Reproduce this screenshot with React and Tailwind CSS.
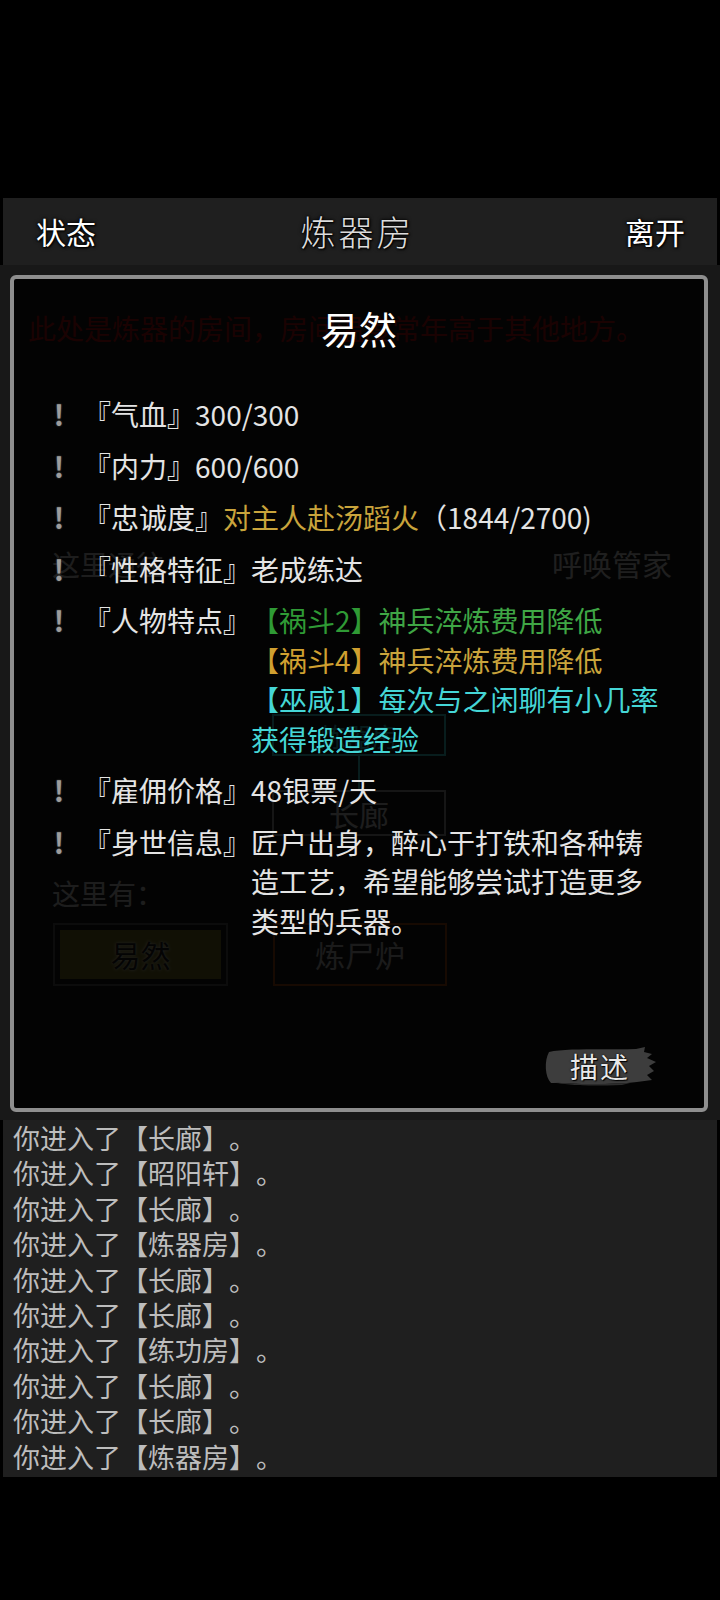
const logLines = [
  "长廊",
  "昭阳轩",
  "长廊",
  "炼器房",
  "长廊",
  "长廊",
  "练功房",
  "长廊",
  "长廊",
  "炼器房",
];

function Row({ label, children }) {
  return (
    <div className="flex">
      <span className="w-[28px] shrink-0 text-center font-bold text-[#9c9c9c] [text-shadow:0_0_2px_#555]">
        !
      </span>
      <span className="ml-[10px] shrink-0 text-[#e4e4e4]">『{label}』</span>
      <div className="flex-1 min-w-0">{children}</div>
    </div>
  );
}

function RoomBehind() {
  // the room page that lies under the dialog
  return (
    <div className="h-full flex flex-col px-[18px] pt-[40px]">
      <p className="text-[28px] leading-[46px] text-[#b81010] pl-[10px]">
        此处是炼器的房间，房间温度常年高于其他地方。
      </p>
      <div className="mt-[190px] flex items-center justify-between pl-[34px] pr-[30px]">
        <span className="text-[28px] text-[#cfcfcf]">这里通往：</span>
        <span className="text-[30px] text-[#d8d8d8]">呼唤管家</span>
      </div>
      <div className="mt-[128px] ml-[254px] w-[174px] flex flex-col items-center">
        <div className="w-full h-[42px] border-2 border-[#3ccccc] flex items-center justify-center text-[26px] text-[#3ccccc]">
          炼器房
        </div>
        <div className="w-[2px] h-[34px] bg-[#3ccccc]" />
        <div className="w-full h-[46px] border-2 border-[#9a9a9a] flex items-center justify-center text-[30px] text-[#cfcfcf]">
          长廊
        </div>
      </div>
      <p className="mt-[36px] pl-[34px] text-[28px] text-[#cfcfcf]">这里有：</p>
      <div className="mt-[9px] pl-[35px] flex gap-[45px]">
        <div className="w-[175px] h-[63px] border-2 border-[#555] p-[5px]">
          <div className="h-full bg-[#7a7428] flex items-center justify-center text-[30px] text-[#222] [text-shadow:0_0_3px_#fff]">
            易然
          </div>
        </div>
        <div className="w-[174px] h-[63px] border-2 border-[#a04a10] flex items-center justify-center text-[30px] text-[#bbb]">
          炼尸炉
        </div>
      </div>
    </div>
  );
}

export default function App() {
  return (
    <div className="w-[720px] h-[1600px] bg-black flex flex-col font-['Noto_Sans_CJK_SC','Noto_Sans',sans-serif]">
      <div className="h-[198px] shrink-0" />

      {/* HEADER */}
      <header className="h-[67px] shrink-0 mx-[3px] bg-[#1f1f1f] flex items-center justify-between pl-[33px] pr-[32px] text-white text-[30px] [text-shadow:0_0_2px_#000,0_0_4px_#000,1px_1px_2px_#000]">
        <span>状态</span>
        <span className="text-[35px] font-light text-[#dcdcdc] tracking-[3px] -ml-[6px]">炼器房</span>
        <span>离开</span>
      </header>

      {/* ROOM + DIALOG */}
      <main className="relative h-[855px] shrink-0 bg-[#181818]">
        <RoomBehind />

        <div className="absolute left-[10px] top-[10px] w-[698px] h-[837px] rounded-[6px] border-4 border-[#8e8e8e] bg-black/[0.86] flex flex-col pl-[31px] pr-[39px] pt-[24px] pb-[22px]">
          <h2 className="text-center text-[38px] leading-[50px] text-white -ml-[24px] -mr-[32px]">
            易然
          </h2>

          <div className="mt-[42px] flex flex-col gap-[12px] text-[28px] leading-[39.5px]">
            <Row label="气血">
              <span className="text-[#e4e4e4]">300/300</span>
            </Row>
            <Row label="内力">
              <span className="text-[#e4e4e4]">600/600</span>
            </Row>
            <Row label="忠诚度">
              <span className="text-[#c9a43c]">对主人赴汤蹈火</span>
              <span className="text-[#e4e4e4]">（1844/2700)</span>
            </Row>
            <Row label="性格特征">
              <span className="text-[#e4e4e4]">老成练达</span>
            </Row>
            <Row label="人物特点">
              <p className="text-[#3fa645]">
                <span className="text-[#2f9a35]">【祸斗2】</span>神兵淬炼费用降低
              </p>
              <p className="text-[#c9a43c]">
                <span className="text-[#d0a030]">【祸斗4】</span>神兵淬炼费用降低
              </p>
              <p className="text-[#45d6d6]">【巫咸1】每次与之闲聊有小几率获得锻造经验</p>
            </Row>
            <Row label="雇佣价格">
              <span className="text-[#e4e4e4]">48银票/天</span>
            </Row>
            <Row label="身世信息">
              <p className="text-[#e4e4e4]">
                匠户出身，醉心于打铁和各种铸造工艺，希望能够尝试打造更多类型的兵器。
              </p>
            </Row>
          </div>

          <div className="flex-1" />

          <div className="flex justify-end pr-[7px]">
            <button className="relative w-[116px] h-[40px] flex items-center justify-center">
              <svg viewBox="0 0 116 40" className="absolute inset-0 w-full h-full">
                <path
                  d="M7 6 C24 2 62 4 94 3 L103 1 L102 6 L110 8 L105 12 L114 16 L107 20 L112 25 L105 29 L110 34 L95 36 C70 39 32 38 9 37 C3 31 2 15 7 6 Z"
                  fill="#3d3d3d"
                />
                <path d="M12 36 C30 39 60 38 88 37 L80 39 C50 40 28 40 12 36 Z" fill="#2c2c2c" />
              </svg>
              <span className="relative text-[28px] leading-none text-[#e8e8e8] tracking-[2px] [text-shadow:0_0_2px_#000,1px_1px_1px_#000]">
                描述
              </span>
            </button>
          </div>
        </div>
      </main>

      {/* LOG */}
      <section className="h-[357px] shrink-0 mx-[3px] bg-[#1f1f1f] pl-[10px] text-[27px] leading-[35.4px] text-[#bdbdbd] [text-spacing-trim:space-all]">
        {logLines.map((room, i) => (
          <p key={i}>你进入了【{room}】。</p>
        ))}
      </section>
    </div>
  );
}
